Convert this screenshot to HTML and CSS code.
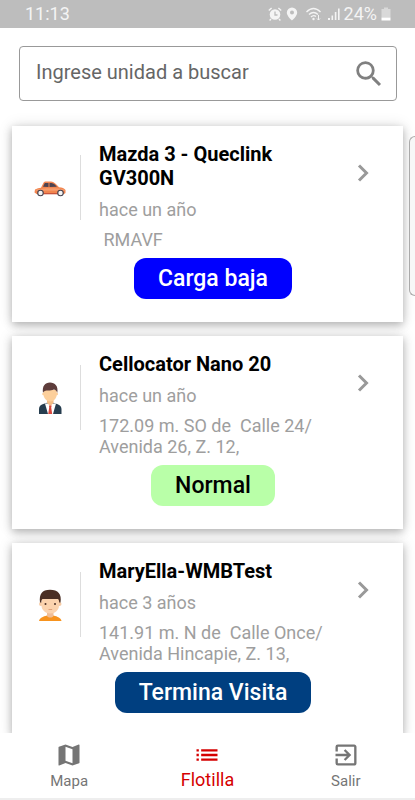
FILE: index.html
```html
<!DOCTYPE html>
<html lang="es">
<head>
    <meta charset="UTF-8">
    <meta name="viewport" content="width=device-width, initial-scale=1.0">
    <title>Flotilla</title>
    <link rel="stylesheet" href="styles.css">
</head>
<body>
    <div class="app">
        <div class="status-bar">
            <span>11:13</span>
            <div class="status-icons">
                <!-- alarm -->
                <svg width="14" height="14" viewBox="0 0 14 14">
                    <circle cx="7" cy="7.5" r="5.3" fill="#f4f4f4"/>
                    <path d="M7 4.5V8H9.5" fill="none" stroke="#bdbdbd" stroke-width="1.3"/>
                    <path d="M.8 3.6L3.6 1M13.2 3.6L10.4 1M3 12l-1.4 1.5M11 12l1.4 1.5" stroke="#f4f4f4" stroke-width="1.4"/>
                </svg>
                <!-- location -->
                <svg width="12" height="14" viewBox="0 0 12 14">
                    <path fill="#f4f4f4" fill-rule="evenodd" d="M6 .5a5.2 5.2 0 0 0-5.2 5.2C.8 9 6 13.5 6 13.5S11.200 9 11.200 5.700A5.200 5.200 0 0 0 6 .5zM6 3.500a2 2 0 1 1 0 4 2 2 0 0 1 0-4z"/>
                </svg>
                <!-- wifi -->
                <svg class="wifi" width="17" height="14" viewBox="0 0 17 14">
                    <path d="M.5 5Q7.500-2 14.500 5M3 7.500Q7.500 3.300 12 7.500M5 10Q7.500 7.500 10 9.500" fill="none" stroke="#f4f4f4" stroke-width="1.400"/>
                    <circle cx="7.500" cy="12" r="1.200" fill="#f4f4f4"/>
                    <path d="M12.500 8v5M11 11.500l1.500 1.500 1.500-1.500" fill="none" stroke="#f4f4f4"/>
                </svg>
                <!-- signal -->
                <svg width="13" height="14" viewBox="0 0 13 14">
                    <path d="M1 11h2v2H1zM4.500 8.500h1.600V13H4.500zM7.800 5h1.600v8H7.800zM11 1.500h1.600V13H11z" fill="#f4f4f4"/>
                </svg>
                <span>24%</span>
                <!-- battery -->
                <svg width="10" height="14" viewBox="0 0 10 14">
                    <path d="M3 .5h4V2h2.500v8.500H.5V2H3z" fill="#d9d9d9"/>
                    <path d="M.5 10.500h9v3H.5z" fill="#fff"/>
                </svg>
            </div>
        </div>

        <form class="search">
            <input type="text" placeholder="Ingrese unidad a buscar" aria-label="Ingrese unidad a buscar">
            <button type="button" aria-label="Buscar">
                <svg width="34" height="34" viewBox="0 0 24 24">
                    <path fill="#808080" d="M15.500 14h-.79l-.28-.27A6.470 6.470 0 0 0 16 9.500 6.500 6.500 0 1 0 9.500 16c1.610 0 3.090-.59 4.230-1.570l.27.28v.79l5 4.990L20.490 19l-4.990-5zm-6 0C7.010 14 5 11.990 5 9.500S7.010 5 9.500 5 14 7.010 14 9.500 11.990 14 9.500 14z"/>
                </svg>
            </button>
        </form>

        <main class="list">
            <article class="card">
                <div class="avatar">
                    <svg width="32" height="32" viewBox="0 0 32 32">
                        <path fill="#f2854f" d="M1 17.500c2-1 4-1.400 6-1.700l2.500-5C10 9.800 11 9.500 12 9.500h5c3 0 5 2.500 8 5.700 3 .3 5.500 1 6.500 2.800v3l-1.500 1H2.500L.5 20.500z"/>
                        <path fill="#f79d6d" d="M2 17.800c5-1.800 22-2.300 28.500 0l.5 1H1.500z"/>
                        <path fill="#4d4350" d="M9 14.800l1.800-3.800h3.700v4zM15.500 11h2c2.200.3 4 2 5.500 3.800l-7.500.2z"/>
                        <path fill="#c9553c" d="M9.500 21h14v1.300h-14z"/>
                        <circle cx="6.500" cy="21" r="3.300" fill="#45434f"/>
                        <circle cx="6.500" cy="21" r="2.200" fill="#f4f4f4"/>
                        <circle cx="26.500" cy="21" r="3.300" fill="#45434f"/>
                        <circle cx="26.500" cy="21" r="2.200" fill="#f4f4f4"/>
                    </svg>
                </div>
                <div class="info">
                    <h2>Mazda 3 - Queclink GV300N</h2>
                    <p class="time">hace un año</p>
                    <p class="address"> RMAVF</p>
                    <span class="status low">Carga baja</span>
                </div>
                <button class="more" type="button" aria-label="Ver Mazda 3">
                    <svg width="12" height="18" viewBox="0 0 12 18"><path d="M2 1.500L9.500 9 2 16.500" fill="none" stroke="#999" stroke-width="3"/></svg>
                </button>
            </article>

            <article class="card">
                <div class="avatar">
                    <svg width="32" height="32" viewBox="0 0 32 32">
                        <path fill="#263d4f" d="M5 32v-5c0-3 2-4.500 5-5.200l3-1h6l3 1c3 .7 5.500 2.200 5.500 5.200v5z"/>
                        <path fill="#fff" d="M11 21.500L14 32h5l3-10.500z"/>
                        <path fill="#f3bd87" d="M13 16h6.500v5l-3.200 3-3.300-3z"/>
                        <path fill="#fccf9b" d="M9.500 8h13.300v4.500c0 3.500-3 7-6.600 7s-6.700-3.500-6.700-7z"/>
                        <circle cx="9.500" cy="12" r="1.300" fill="#fccf9b"/>
                        <circle cx="22.800" cy="12" r="1.300" fill="#fccf9b"/>
                        <path fill="#5e3d3b" d="M9 11C8 4 11 .5 16 .5S24.500 4 23.300 11c-.5-2-1.300-3-3.300-3.500-4 1.800-7 .5-9.300 1.500-.8.500-1.300 1-1.700 2z"/>
                        <path fill="#d8483d" d="M15 23.500h2.700l-.5 2 1 6.500h-4l1-6.500z"/>
                    </svg>
                </div>
                <div class="info">
                    <h2>Cellocator Nano 20</h2>
                    <p class="time">hace un año</p>
                    <p class="address">172.09 m. SO de  Calle 24/ Avenida 26, Z. 12,</p>
                    <span class="status normal">Normal</span>
                </div>
                <button class="more" type="button" aria-label="Ver Cellocator Nano 20">
                    <svg width="12" height="18" viewBox="0 0 12 18"><path d="M2 1.500L9.500 9 2 16.500" fill="none" stroke="#999" stroke-width="3"/></svg>
                </button>
            </article>

            <article class="card">
                <div class="avatar">
                    <svg width="32" height="32" viewBox="0 0 32 32">
                        <path fill="#f7931e" d="M5 32c.5-3 4-4.500 8-5.500h6.500c4 1 7.500 2.500 8 5.500z"/>
                        <path fill="#f0be97" d="M13 22h6.500v5c-1.500 2-5 2-6.500 0z"/>
                        <circle cx="7" cy="15" r="2" fill="#f6cba6"/>
                        <circle cx="25.500" cy="15" r="2" fill="#f6cba6"/>
                        <path fill="#fbd3ae" d="M7.500 8h17.500v8.500c0 4.500-4 8-8.700 8s-8.800-3.500-8.800-8z"/>
                        <path fill="#4b2f24" d="M6 13.500C5 5 8 .8 16 .8S28 5 26.500 13.500h-1.300c0-2-.5-3-1.200-3.500H8.500c-.8.500-1.200 1.500-1.200 3.500z"/>
                        <circle cx="11.500" cy="15" r="1" fill="#4b2f24"/>
                        <circle cx="21" cy="15" r="1" fill="#4b2f24"/>
                        <path d="M14.500 20.500h3.700" fill="none" stroke="#e0a27c"/>
                    </svg>
                </div>
                <div class="info">
                    <h2>MaryElla-WMBTest</h2>
                    <p class="time">hace 3 años</p>
                    <p class="address">141.91 m. N de  Calle Once/ Avenida Hincapie, Z. 13,</p>
                    <span class="status visit">Termina Visita</span>
                </div>
                <button class="more" type="button" aria-label="Ver MaryElla-WMBTest">
                    <svg width="12" height="18" viewBox="0 0 12 18"><path d="M2 1.500L9.500 9 2 16.500" fill="none" stroke="#999" stroke-width="3"/></svg>
                </button>
            </article>
        </main>

        <nav class="tabs">
            <a href="#mapa">
                <svg width="28" height="28" viewBox="0 0 24 24"><path fill="currentColor" d="M20.500 3l-.16.03L15 5.100 9 3 3.360 4.900c-.21.07-.36.25-.36.48V20.500c0 .28.22.5.5.5l.16-.03L9 18.900l6 2.100 5.640-1.900c.21-.07.36-.25.36-.48V3.500c0-.28-.22-.5-.5-.5zM15 19l-6-2.110V5l6 2.110V19z"/></svg>
                <span>Mapa</span>
            </a>
            <a href="#flotilla" class="active">
                <svg width="28" height="28" viewBox="0 0 24 24"><path fill="currentColor" d="M3 13h2v-2H3v2zm0 4h2v-2H3v2zm0-8h2V7H3v2zm4 4h14v-2H7v2zm0 4h14v-2H7v2zM7 7v2h14V7H7z"/></svg>
                <span>Flotilla</span>
            </a>
            <a href="#salir">
                <svg width="28" height="28" viewBox="0 0 24 24"><path fill="currentColor" d="M10.090 15.590L11.500 17l5-5-5-5-1.410 1.410L12.670 11H3v2h9.670l-2.580 2.590zM19 3H5a2 2 0 0 0-2 2v4h2V5h14v14H5v-4H3v4a2 2 0 0 0 2 2h14c1.100 0 2-.9 2-2V5c0-1.100-.9-2-2-2z"/></svg>
                <span>Salir</span>
            </a>
        </nav>

        <div class="edge-handle"></div>
    </div>
</body>
</html>
```
FILE: styles.css
```css
* {
    box-sizing: border-box;
}

body {
    margin: 0;
    font-family: Roboto, sans-serif;
    background-color: #fff;
}

h2, p {
    margin: 0;
}

button {
    padding: 0;
    border: none;
    background: none;
    cursor: pointer;
}

svg {
    display: block;
}

.app {
    position: relative;
    display: flex;
    flex-direction: column;
    height: 100vh;
    overflow: hidden;
}

.status-bar {
    display: flex;
    justify-content: space-between;
    align-items: center;
    padding: 4px 24px 4px 25px;
    background-color: #bdbdbd;
    color: #f4f4f4;
    font-size: 18px;
    line-height: 20px;
}

.status-icons {
    display: flex;
    align-items: center;
    gap: 4px;
}

.wifi {
    margin-left: 4px;
}

.search {
    display: flex;
    align-items: center;
    height: 55px;
    margin: 18px 18px 0 19px;
    padding: 0 10px 0 16px;
    border: 1px solid #999;
    border-radius: 4px;
}

.search input {
    flex: 1;
    min-width: 0;
    padding: 0 0 4px;
    border: none;
    outline: none;
    font-family: inherit;
    font-size: 20px;
    line-height: 24px;
}

.search input::placeholder {
    color: #666;
    opacity: 1;
}

.list {
    flex: 1;
    min-height: 0;
    padding: 25px 12px;
    overflow-y: auto;
    scrollbar-width: none;
}

.card {
    display: flex;
    align-items: flex-start;
    margin-bottom: 14px;
    padding: 16px 34px 23px 0;
    background-color: #fff;
    box-shadow: 0 3px 8px rgba(0, 0, 0, 0.25), 0 0 14px rgba(0, 0, 0, 0.12);
}

.avatar {
    display: flex;
    align-items: center;
    justify-content: flex-end;
    width: 69px;
    height: 65px;
    margin-top: 13px;
    padding-right: 14px;
    border-right: 1px solid #ddd;
}

.info {
    flex: 1;
    display: flex;
    flex-direction: column;
    margin-left: 18px;
    padding-right: 30px;
}

.info h2 {
    font-size: 20px;
    font-weight: 700;
    line-height: 24px;
    color: #000;
}

.time,
.address {
    margin-top: 9px;
    font-size: 18px;
    line-height: 21px;
    color: #9e9e9e;
}

.address {
    white-space: pre-wrap;
}

.status {
    align-self: center;
    margin-top: 8px;
    padding: 0 24px;
    border-radius: 12px;
    font-size: 23px;
    font-weight: 500;
    line-height: 41px;
}

.low {
    background-color: #0000ff;
    color: #fff;
}

.normal {
    background-color: #b9ffa8;
    color: #000;
}

.visit {
    background-color: #003f80;
    color: #fff;
}

.more {
    margin-top: 22px;
}

.tabs {
    display: flex;
    height: 67px;
    padding-top: 8px;
    background-color: #fff;
    border-bottom: 2px solid #eee;
}

.tabs a {
    flex: 1;
    display: flex;
    flex-direction: column;
    align-items: center;
    color: #757575;
    font-size: 15px;
    line-height: 24px;
    text-decoration: none;
}

.tabs .active {
    color: #d50000;
    font-size: 18px;
    line-height: 22px;
}

/* system edge panel, peeks in from the right side */
.edge-handle {
    position: absolute;
    top: 136px;
    right: 0;
    width: 6px;
    height: 160px;
    background-color: #f7f7f7;
    border: 1px solid #aaa;
    border-right: none;
    border-radius: 6px 0 0 6px;
}
```
